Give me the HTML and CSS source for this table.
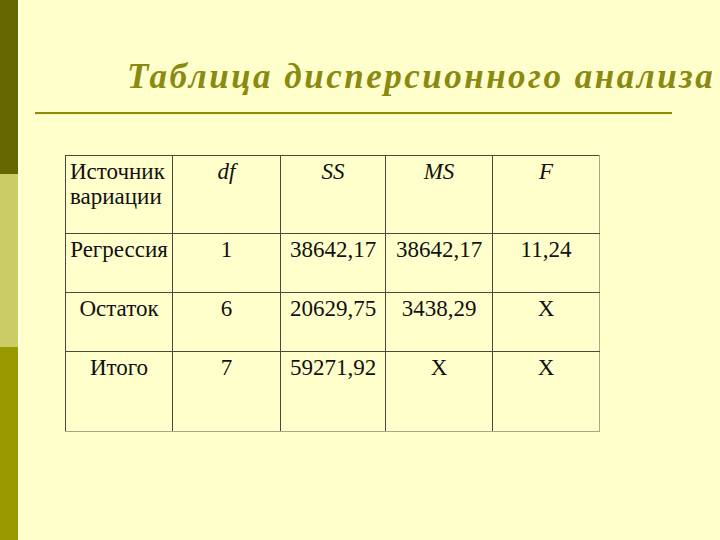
FILE: index.html
```html
<!DOCTYPE html>
<html lang="ru">
<head>
<meta charset="utf-8">
<title>Таблица дисперсионного анализа</title>
<link rel="stylesheet" href="styles.css">
</head>
<body>
<div class="slide">
  <div class="sidebar">
    <div class="seg seg-dark"></div>
    <div class="seg seg-light"></div>
    <div class="seg seg-mid"></div>
  </div>
  <div class="main">
    <h1 class="title">Таблица дисперсионного анализа</h1>
    <div class="rule"></div>
    <table class="anova">
      <colgroup>
        <col class="c1"><col class="c2"><col class="c3"><col class="c4"><col class="c5">
      </colgroup>
      <tr class="r-head">
        <td class="left">Источник вариации</td>
        <td><i>df</i></td>
        <td><i>SS</i></td>
        <td><i>MS</i></td>
        <td><i>F</i></td>
      </tr>
      <tr class="r-mid">
        <td>Регрессия</td>
        <td>1</td>
        <td>38642,17</td>
        <td>38642,17</td>
        <td>11,24</td>
      </tr>
      <tr class="r-mid">
        <td>Остаток</td>
        <td>6</td>
        <td>20629,75</td>
        <td>3438,29</td>
        <td>X</td>
      </tr>
      <tr class="r-last">
        <td>Итого</td>
        <td>7</td>
        <td>59271,92</td>
        <td>X</td>
        <td>X</td>
      </tr>
    </table>
  </div>
</div>
</body>
</html>
```

FILE: styles.css
```css
html, body {
  margin: 0;
  padding: 0;
}
body {
  background: #ffffcc;
  font-family: "Liberation Serif", serif;
}
.slide {
  width: 720px;
  height: 540px;
  display: flex;
  overflow: hidden;
  background: #ffffcc;
}
.sidebar {
  width: 18px;
  flex: none;
  display: flex;
  flex-direction: column;
  border-right: 2px solid #ffffe2;
}
.seg-dark { height: 174px; background: #666600; }
.seg-light { height: 173px; background: #cccc66; }
.seg-mid { flex: 1; background: #999900; }
.main {
  flex: 1;
  padding-top: 58px;
  min-width: 0;
  overflow: hidden;
}
.title {
  margin: 0 0 0 107px;
  font-family: "Liberation Serif", serif;
  font-style: italic;
  font-weight: bold;
  font-size: 35px;
  line-height: 38px;
  letter-spacing: 2.5px;
  color: #8a8a12;
  white-space: nowrap;
}
.rule {
  margin: 16px 0 0 15px;
  width: 637px;
  height: 2px;
  background: #8c8c0a;
  box-shadow: 0 1px 0 #f4f4b8;
}
.anova {
  margin: 41px 0 0 45px;
  border-collapse: collapse;
  table-layout: fixed;
  width: 534px;
  font-family: "Liberation Serif", serif;
  font-size: 23px;
  line-height: 25px;
  color: #111;
  border-top: 1px solid #555540;
  border-left: 1px solid #555540;
  border-right: 1px solid #a8a888;
  border-bottom: 1px solid #a8a888;
}
.c1 { width: 107px; }
.c2 { width: 108px; }
.c3 { width: 105px; }
.c4 { width: 107px; }
.c5 { width: 107px; }
.anova td {
  border: 1px solid #4a4a3a;
  padding: 3px 2px 0;
  vertical-align: top;
  text-align: center;
  white-space: nowrap;
}
.anova tr:last-child td { border-bottom-color: #a8a888; }
.anova td:last-child { border-right-color: #a8a888; }
.anova td.left {
  text-align: left;
  padding-left: 4px;
  white-space: normal;
}
.r-head { height: 78px; }
.r-mid { height: 59px; }
.r-last { height: 80px; }
```
